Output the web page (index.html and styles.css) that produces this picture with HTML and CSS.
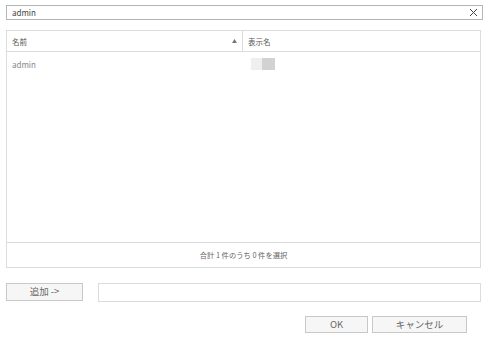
FILE: index.html
```html
<!DOCTYPE html>
<html>
<head>
<meta charset="UTF-8">
<link rel="stylesheet" href="styles.css">
</head>
<body>
<div class="DIALOG">
    <div class="SEARCH">
        <span class="SEARCH_TEXT">admin</span>
        <span class="SEARCH_CLEAR">
            <svg width="9" height="9" viewBox="0 0 9 9"><path d="M1 1L8 8M8 1L1 8" stroke="#444" stroke-width="1" fill="none"/></svg>
        </span>
    </div>
    <div class="GRID">
        <div class="GRID_HEAD">
            <div class="COL COL_NAME">
                <span>名前</span>
                <svg class="SORT" width="5" height="4" viewBox="0 0 5 4"><path d="M0 4L2.5 0L5 4Z" fill="#777"/></svg>
            </div>
            <div class="COL COL_DISP"><span>表示名</span></div>
        </div>
        <div class="GRID_BODY">
            <div class="ROW">
                <div class="CELL CELL_NAME">admin</div>
                <div class="CELL CELL_DISP">
                    <span class="BLUR BLUR_A"></span><span class="BLUR BLUR_B"></span>
                </div>
            </div>
        </div>
        <div class="GRID_FOOT">合計 1 件のうち 0 件を選択</div>
    </div>
    <div class="ADD_ROW">
        <button class="BTN BTN_ADD">追加 -&gt;</button>
        <div class="ADD_INPUT"></div>
    </div>
    <div class="BTN_ROW">
        <button class="BTN BTN_OK">OK</button>
        <button class="BTN BTN_CANCEL">キャンセル</button>
    </div>
</div>
</body>
</html>
```

FILE: styles.css
```css
body {
    margin: 0;
    background: #fff;
    font-family: "Noto Sans CJK JP", "Noto Sans", sans-serif;
    font-size: 7.5px;
    color: #555;
}
.DIALOG {
    width: 486px;
    height: 343px;
    box-sizing: border-box;
    padding: 5px 3px 0 6px;
    display: flex;
    flex-direction: column;
}
.SEARCH {
    height: 15px;
    box-sizing: border-box;
    border: 1px solid #b4b4b4;
    display: flex;
    align-items: center;
    justify-content: space-between;
    padding: 0 4px 0 5px;
}
.SEARCH_TEXT {
    font-size: 8px;
    color: #444;
}
.SEARCH_CLEAR {
    display: flex;
}
.GRID {
    margin: 10px 2px 0 0;
    height: 238px;
    box-sizing: border-box;
    border: 1px solid #dcdcdc;
    display: flex;
    flex-direction: column;
}
.GRID_HEAD {
    height: 21px;
    box-sizing: border-box;
    border-bottom: 1px solid #dcdcdc;
    display: flex;
}
.COL {
    display: flex;
    align-items: center;
    padding: 0 5px;
}
.COL_NAME {
    width: 236px;
    box-sizing: border-box;
    border-right: 1px solid #dcdcdc;
    justify-content: space-between;
}
.COL_DISP {
    flex: 1;
}
.GRID_BODY {
    flex: 1;
}
.ROW {
    display: flex;
    height: 24px;
    align-items: center;
}
.CELL {
    padding: 0 5px;
    box-sizing: border-box;
}
.CELL_NAME {
    width: 236px;
    font-size: 8px;
    color: #888;
}
.CELL_DISP {
    display: flex;
    padding-left: 8px;
}
.BLUR {
    display: inline-block;
    height: 12px;
}
.BLUR_A {
    width: 11px;
    background: #efefef;
}
.BLUR_B {
    width: 13px;
    background: #d2d2d2;
}
.GRID_FOOT {
    height: 24px;
    border-top: 1px solid #dcdcdc;
    display: flex;
    align-items: center;
    justify-content: center;
    color: #666;
    font-size: 7.3px;
}
.ADD_ROW {
    margin: 15px 2px 0 0;
    display: flex;
    gap: 15px;
    height: 19px;
}
.BTN {
    font-family: "Noto Sans CJK JP", "Noto Sans", sans-serif;
    font-size: 9.5px;
    color: #666;
    background: #f6f6f6;
    border: 1px solid #c8c8c8;
    padding: 0;
    margin: 0;
    box-sizing: border-box;
    line-height: 1;
}
.BTN_ADD {
    width: 77px;
    height: 18px;
}
.ADD_INPUT {
    flex: 1;
    border: 1px solid #dcdcdc;
    box-sizing: border-box;
}
.BTN_ROW {
    margin: 14px 16px 0 0;
    display: flex;
    justify-content: flex-end;
    gap: 4px;
}
.BTN_OK {
    width: 63px;
    height: 17px;
}
.BTN_CANCEL {
    width: 95px;
    height: 17px;
}
```
